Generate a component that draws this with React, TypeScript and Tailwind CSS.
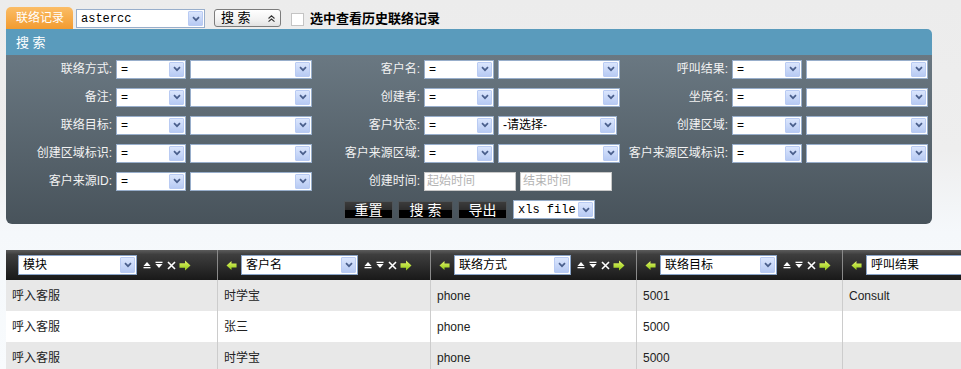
import React from "react";

const Chev = () => (
  <svg width="8" height="6" viewBox="0 0 8 6">
    <path d="M1 1.2 L4 4.2 L7 1.2" fill="none" stroke="#4a5f8c" strokeWidth="1.7" />
  </svg>
);

function ArrowBox({ h }: { h: string }) {
  return (
    <span
      className={`m-px flex w-[15px] items-center justify-center rounded-[1px] border border-[#b9cbf3] bg-[linear-gradient(to_bottom,#dbe6fd,#b7caf3)] ${h}`}
    >
      <Chev />
    </span>
  );
}

function Sel({
  w,
  text,
  mono,
}: {
  w: string;
  text?: string;
  mono?: boolean;
}) {
  return (
    <div className={`flex h-[19px] shrink-0 items-center border border-[#98aecb] bg-white ${w}`}>
      <span
        className={`flex-1 overflow-hidden whitespace-nowrap pl-[4px] text-[12px] leading-[14px] text-black ${
          mono ? "font-[family-name:'Liberation_Mono',monospace]" : ""
        }`}
      >
        {text}
      </span>
      <ArrowBox h="h-[15px]" />
    </div>
  );
}

function DateIn({ ph }: { ph: string }) {
  return (
    <div className="flex h-[19px] w-[92px] shrink-0 items-center border border-[#c8c8c8] bg-white pl-[2px] text-[12px] leading-[14px] text-[#b4b4b4]">
      {ph}
    </div>
  );
}

function Label({ text, w }: { text: string; w: string }) {
  return (
    <div className={`shrink-0 pr-[2px] text-right text-[12px] leading-[14px] text-[#f2f2f2] ${w}`}>{text}</div>
  );
}

function Field({ label, first }: { label: string; first?: boolean }) {
  return (
    <div className="flex items-center">
      <Label text={label} w={first ? "w-[108px]" : "w-[110px]"} />
      <div className="ml-[2px]">
        <Sel w="w-[70px]" text="=" />
      </div>
      <div className="ml-[4px]">
        <Sel w="w-[122px]" />
      </div>
    </div>
  );
}

const BlackBtn = ({ text, w }: { text: string; w: string }) => (
  <div
    className={`flex h-[18px] items-center justify-center border border-[#4e5458] bg-[linear-gradient(to_bottom,#3c3c3c_0%,#2c2c2c_50%,#000_50%,#000_100%)] text-[14px] leading-[16px] text-white ${w}`}
  >
    {text}
  </div>
);

const UpIcon = () => (
  <svg width="8" height="8" viewBox="0 0 8 8">
    <path d="M4 1 L7.5 5 L0.5 5 Z" fill="#fff" />
    <rect x="0.5" y="6" width="7" height="1.3" fill="#fff" />
  </svg>
);
const DownIcon = () => (
  <svg width="8" height="8" viewBox="0 0 8 8">
    <rect x="0.5" y="0.7" width="7" height="1.3" fill="#fff" />
    <path d="M0.5 3 L7.5 3 L4 7 Z" fill="#fff" />
  </svg>
);
const XIcon = () => (
  <svg width="9" height="9" viewBox="0 0 9 9">
    <path d="M1 1 L8 8 M8 1 L1 8" stroke="#fff" strokeWidth="1.6" />
  </svg>
);
const RightArrow = () => (
  <svg width="12" height="11" viewBox="0 0 12 11">
    <defs>
      <linearGradient id="ga" x1="0" y1="0" x2="0" y2="1">
        <stop offset="0" stopColor="#e4f56a" />
        <stop offset="1" stopColor="#8fc814" />
      </linearGradient>
    </defs>
    <path d="M0.5 3.3 L6 3.3 L6 0.5 L11.5 5.5 L6 10.5 L6 7.7 L0.5 7.7 Z" fill="url(#ga)" />
  </svg>
);
const LeftArrow = () => (
  <svg width="11" height="11" viewBox="0 0 12 11">
    <defs>
      <linearGradient id="gb" x1="0" y1="0" x2="0" y2="1">
        <stop offset="0" stopColor="#e4f56a" />
        <stop offset="1" stopColor="#8fc814" />
      </linearGradient>
    </defs>
    <path d="M11.5 3.3 L6 3.3 L6 0.5 L0.5 5.5 L6 10.5 L6 7.7 L11.5 7.7 Z" fill="url(#gb)" />
  </svg>
);

function HeadSel({ text, w }: { text: string; w: string }) {
  return (
    <div className={`flex h-[20px] shrink-0 items-center border border-[#8aa4c8] bg-white ${w}`}>
      <span className="flex-1 pl-[4px] text-[12px] leading-[14px] text-black">{text}</span>
      <ArrowBox h="h-[16px]" />
    </div>
  );
}

const Icons = () => (
  <div className="ml-[6px] flex items-center">
    <UpIcon />
    <div className="ml-[4px]">
      <DownIcon />
    </div>
    <div className="ml-[4px]">
      <XIcon />
    </div>
    <div className="ml-[3px]">
      <RightArrow />
    </div>
  </div>
);

const cols = [
  { name: "模块", w: "w-[212px]" },
  { name: "客户名", w: "w-[213px]" },
  { name: "联络方式", w: "w-[206px]" },
  { name: "联络目标", w: "w-[206px]" },
  { name: "呼叫结果", w: "w-[300px]" },
];

const rows = [
  ["呼入客服", "时学宝", "phone", "5001", "Consult"],
  ["呼入客服", "张三", "phone", "5000", ""],
  ["呼入客服", "时学宝", "phone", "5000", ""],
];

export default function App() {
  return (
    <div className="h-[369px] w-[961px] overflow-hidden bg-[linear-gradient(to_bottom,#ececec_0px,#eeeeee_150px,#f5f8fb_232px,#f8fbfd_369px)] font-[family-name:'Liberation_Sans','Noto_Sans_CJK_SC',sans-serif]">
      {/* top bar */}
      <div className="flex h-[29px] items-start pl-[6px] pt-[7px]">
        <div className="flex h-[22px] w-[67px] items-center rounded-t-[5px] bg-[linear-gradient(to_bottom,#fbbd66,#f29b30)] pl-[10px] text-[12px] leading-[14px] text-white">
          联络记录
        </div>
        <div className="ml-[3px] mt-[2px]">
          <Sel w="w-[129px]" text="astercc" mono />
        </div>
        <div className="ml-[9px] mt-[2px] flex h-[18px] w-[67px] items-center rounded-[3px] border border-[#7c7c7c] bg-[linear-gradient(to_bottom,#ffffff,#f2f2f2_60%,#e2e2e2)] pl-[6px] text-[13px] leading-[14px] text-black">
          <span className="flex-1">搜 索</span>
          <svg width="9" height="9" viewBox="0 0 9 9" className="mr-[4px]">
            <path d="M1.5 4.5 L4.5 1.8 L7.5 4.5 M1.5 7.7 L4.5 5 L7.5 7.7" fill="none" stroke="#333" strokeWidth="1.1" />
          </svg>
        </div>
        <div className="ml-[10px] mt-[6px] h-[13px] w-[13px] border border-[#c4c4c4] bg-white" />
        <div className="ml-[6px] mt-[4px] text-[13px] font-bold leading-[15px] text-black">选中查看历史联络记录</div>
      </div>

      {/* search panel */}
      <div className="ml-[6px] w-[926px]">
        <div className="flex h-[26px] items-center rounded-tr-[5px] bg-[#5a9bbc] pl-[10px] text-[13px] leading-[15px] text-white">
          搜 索
        </div>
        <div className="rounded-b-[6px] bg-[linear-gradient(to_bottom,#6a7882,#48535b)] pb-[5px]">
          <div className="flex h-[28px] items-center">
            <Field label="联络方式:" first />
            <Field label="客户名:" />
            <Field label="呼叫结果:" />
          </div>
          <div className="flex h-[28px] items-center">
            <Field label="备注:" first />
            <Field label="创建者:" />
            <Field label="坐席名:" />
          </div>
          <div className="flex h-[28px] items-center">
            <Field label="联络目标:" first />
            <div className="flex items-center">
              <Label text="客户状态:" w="w-[110px]" />
              <div className="ml-[2px]">
                <Sel w="w-[70px]" text="=" />
              </div>
              <div className="ml-[4px] mr-[3px]">
                <Sel w="w-[119px]" text="-请选择-" />
              </div>
            </div>
            <Field label="创建区域:" />
          </div>
          <div className="flex h-[28px] items-center">
            <Field label="创建区域标识:" first />
            <Field label="客户来源区域:" />
            <Field label="客户来源区域标识:" />
          </div>
          <div className="flex h-[28px] items-center">
            <Field label="客户来源ID:" first />
            <div className="flex items-center">
              <Label text="创建时间:" w="w-[110px]" />
              <div className="ml-[2px]">
                <DateIn ph="起始时间" />
              </div>
              <div className="ml-[4px]">
                <DateIn ph="结束时间" />
              </div>
            </div>
          </div>
          <div className="mt-[5px] flex items-center justify-center gap-[5px] pl-[1px]">
            <BlackBtn text="重置" w="w-[49px]" />
            <BlackBtn text="搜 索" w="w-[55px]" />
            <BlackBtn text="导出" w="w-[49px]" />
            <div className="ml-[1px]">
              <Sel w="w-[82px]" text="xls file" mono />
            </div>
          </div>
        </div>
      </div>

      {/* table */}
      <div className="ml-[6px] mt-[26px] w-[1200px]">
        <div className="flex h-[30px] bg-[linear-gradient(to_bottom,#5c5c5c_0%,#3e3e3e_15%,#2a2a2a_60%,#191919_100%)]">
          {cols.map((c, i) => (
            <div
              key={c.name}
              className={`flex shrink-0 items-center border-r border-[#8a8a8a] ${c.w} ${i === 0 ? "pl-[12px]" : "pl-[8px]"}`}
            >
              {i > 0 && (
                <div className="mr-[4px]">
                  <LeftArrow />
                </div>
              )}
              <HeadSel text={c.name} w={i === 0 ? "w-[119px]" : "w-[117px]"} />
              {i < 4 && <Icons />}
            </div>
          ))}
        </div>
        {rows.map((r, ri) => (
          <div key={ri} className={`flex h-[31px] ${ri % 2 === 0 ? "bg-[#e8e8e8]" : "bg-white"}`}>
            {r.map((cell, ci) => (
              <div
                key={ci}
                className={`flex shrink-0 items-center border-r border-[#cccccc] pl-[6px] text-[12px] leading-[14px] text-[#222] ${cols[ci].w}`}
              >
                {cell}
              </div>
            ))}
          </div>
        ))}
      </div>
    </div>
  );
}
